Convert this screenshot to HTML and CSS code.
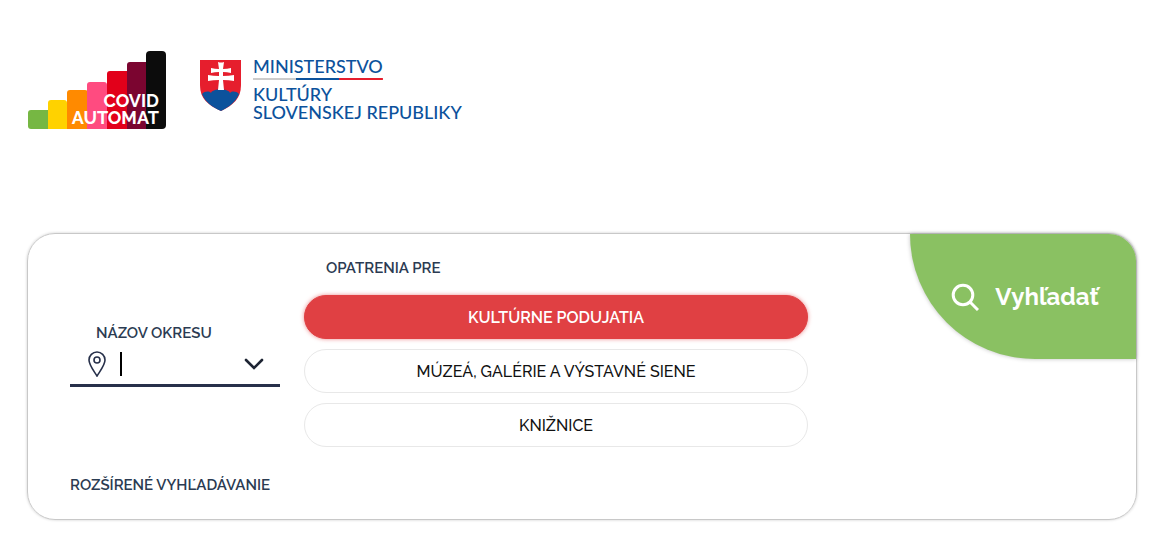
FILE: index.html
```html
<!DOCTYPE html>
<html lang="sk">
<head>
    <meta charset="UTF-8">
    <meta name="viewport" content="width=device-width, initial-scale=1.0">
    <title>COVID Automat</title>
    <link rel="stylesheet" href="styles.css">
</head>
<body>
    <header class="header">
        <a href="#" class="logo">
            <svg width="138" height="78" viewBox="0 0 138 78" role="img" aria-label="COVID Automat">
                <path fill="#76b743" d="M0 75V62q0-3 3-3h17v19H3q-3 0-3-3z"/>
                <path fill="#ffd200" d="M20 78V52q0-3 3-3h13q3 0 3 3v26z"/>
                <path fill="#ff8a00" d="M39 78V42q0-3 3-3h15q3 0 3 3v36z"/>
                <path fill="#ff4b80" d="M59 78V34q0-3 3-3h14q3 0 3 3v44z"/>
                <path fill="#e2001a" d="M79 78V23q0-3 3-3h17v58z"/>
                <path fill="#7b0530" d="M99 78V14q0-3 3-3h16v67z"/>
                <path fill="#0c0c0c" d="M118 78V4q0-4 4-4h12q4 0 4 4v70q0 4-4 4z"/>
                <text x="131" y="56" class="automat-text">COVID</text>
                <text x="131" y="73" class="automat-text">AUTOMAT</text>
            </svg>
        </a>
        <a href="#" class="ministry">
            <svg class="shield" width="42" height="52" viewBox="0 0 42 52" aria-hidden="true">
                <path fill="#e61e2d" d="M0 0h41v25c0 14-8 20-20 26C8 45 0 39 0 25z"/>
                <path fill="#0c529c" d="M2 34c3-3 7-3 9-1 2-5 17-5 19 0 2-2 6-2 9 1-3 8-10 13-18 17C12 47 5 42 2 34z"/>
                <path fill="#fff" d="M18 2q3 1 6 0l-1 7q4 0 8-1v5q-4-1-8-1v4q6 0 11-1v6q-5-1-11-1l1 10h-6l1-10q-6 0-11 1v-6q5 1 11 1v-4q-4 0-8 1V8q4 1 8 1z"/>
            </svg>
            <span class="ministry-name">
                <span class="ministry-top">MINISTERSTVO</span>
                <span>KULTÚRY</span>
                <span>SLOVENSKEJ REPUBLIKY</span>
            </span>
        </a>
    </header>

    <main class="card">
        <div class="district">
            <label for="district" class="label">NÁZOV OKRESU</label>
            <div class="district-field">
                <svg width="18" height="26" viewBox="0 0 18 26" fill="none" stroke="#27304a" stroke-width="1.6" aria-hidden="true">
                    <path d="M9 25C6 20 1 14 1 9a8 8 0 0 1 16 0c0 5-5 11-8 16z"/>
                    <circle cx="9" cy="9" r="3"/>
                </svg>
                <span class="caret"></span>
                <input type="text" id="district" autocomplete="off">
                <button type="button" class="toggle" aria-label="Zobraziť okresy">
                    <svg width="20" height="12" viewBox="0 0 20 12" fill="none" stroke="#1d2433" stroke-width="2.6" stroke-linecap="round">
                        <path d="M2 2l8 8 8-8"/>
                    </svg>
                </button>
            </div>
        </div>
        <div class="measures">
            <h2 class="label">OPATRENIA PRE</h2>
            <button type="button" class="option active">KULTÚRNE PODUJATIA</button>
            <button type="button" class="option">MÚZEÁ, GALÉRIE A VÝSTAVNÉ SIENE</button>
            <button type="button" class="option">KNIŽNICE</button>
        </div>
        <button type="submit" class="search">
            <svg width="28" height="28" viewBox="0 0 28 28" fill="none" stroke="#fff" stroke-width="3" aria-hidden="true">
                <circle cx="12" cy="12" r="9.8"/>
                <path d="M19 19l8 8"/>
            </svg>
            <span>Vyhľadať</span>
        </button>
        <a href="#" class="label advanced">ROZŠÍRENÉ VYHĽADÁVANIE</a>
    </main>
</body>
</html>
```
FILE: styles.css
```css
* {
    box-sizing: border-box;
}
body {
    margin: 0;
    padding: 51px 14px 24px 27px;
    background-color: #fff;
    font-family: Raleway, Lato, sans-serif;
}
.header {
    display: flex;
    gap: 34px;
    padding-left: 1px;
    margin-bottom: 104px;
}
.logo svg {
    display: block;
}
.automat-text {
    fill: #fff;
    font-size: 18px;
    font-weight: 700;
    text-anchor: end;
}
.ministry {
    display: flex;
    gap: 11px;
    padding-top: 6px;
    color: #0c529c;
    text-decoration: none;
}
.shield {
    margin-top: 3px;
}
.ministry-name {
    display: flex;
    flex-direction: column;
    align-items: flex-start;
    font-family: Lato, sans-serif;
    font-size: 18px;
    font-weight: 500;
    line-height: 18px;
}
.ministry-top {
    padding-bottom: 5px;
    margin-bottom: 5px;
    background: linear-gradient(to right, #ccc 33%, #0c529c 33%, #0c529c 66%, #e61e2d 66%) bottom / 100% 2px no-repeat;
}
.card {
    display: grid;
    grid-template-columns: 210px 1fr 226px;
    column-gap: 24px;
    padding: 0 0 24px 42px;
    border: 1px solid #c8c8c8;
    border-radius: 28px;
    box-shadow: 0 0 3px rgba(0, 0, 0, 0.2);
}
.label {
    margin: 0;
    color: #2b3b52;
    font-size: 15px;
    font-weight: 600;
    line-height: 20px;
}
.district {
    padding-top: 89px;
}
.district .label {
    display: block;
    padding-left: 26px;
}
.district-field {
    display: flex;
    align-items: center;
    height: 44px;
    padding: 0 16px 0 18px;
    border-bottom: 3px solid #27304a;
}
.caret {
    width: 2px;
    height: 24px;
    margin-left: 14px;
    background-color: #000;
}
.district-field input {
    flex: 1;
    min-width: 0;
    padding: 0 4px;
    border: none;
    outline: none;
    background: none;
    font: inherit;
}
.toggle {
    padding: 0;
    border: none;
    background: none;
    cursor: pointer;
}
.toggle svg {
    display: block;
}
.measures {
    display: flex;
    flex-direction: column;
    gap: 10px;
    padding-top: 24px;
    margin-right: 78px;
}
.measures .label {
    padding-left: 22px;
    margin-bottom: 7px;
}
.option {
    height: 44px;
    border: 1px solid #e8e8e8;
    border-radius: 22px;
    background-color: #fff;
    color: #111;
    font-family: inherit;
    font-size: 16px;
    font-weight: 500;
    cursor: pointer;
}
.option.active {
    border-color: #e04043;
    background-color: #e04043;
    box-shadow: 0 0 4px rgba(224, 64, 67, 0.6);
    color: #fff;
    font-weight: 600;
}
.search {
    display: flex;
    align-items: center;
    justify-content: center;
    gap: 16px;
    height: 125px;
    padding: 0 0 0 4px;
    border: none;
    border-radius: 0 27px 0 125px;
    background-color: #8ac162;
    box-shadow: 0 0 4px rgba(0, 0, 0, 0.25);
    color: #fff;
    font-family: inherit;
    font-size: 24px;
    font-weight: 700;
    cursor: pointer;
}
.advanced {
    grid-column: 1 / -1;
    justify-self: start;
    margin-top: 28px;
    text-decoration: none;
}
```
